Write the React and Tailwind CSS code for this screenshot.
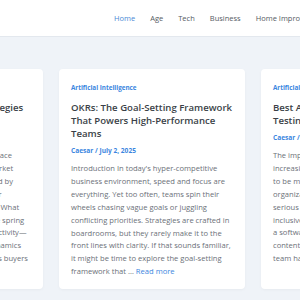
import React from 'react';

const navItems = ['Home', 'Age', 'Tech', 'Business', 'Home Improvement', 'Health'];

const posts = [
  {
    id: 1,
    category: 'Real Estate',
    title: 'Spring Markets: Selling Strategies for 2025',
    author: 'Caesar / June 28, 2025',
    lines: [
      'Introduction Spring holds a special place',
      'in the hearts of sellers across the market',
      'The warmer days are usually followed by',
      'a rush of new home listings. However',
      'competition can be tough for sellers. What',
      'strategies really work best during the spring',
      "season, when there's a big burst of activity—",
      'and how can you benefit from its dynamics',
      'to sell faster and attract more serious buyers',
    ],
    more: 'before summer arrives …',
  },
  {
    id: 2,
    category: 'Artificial Intelligence',
    title: 'OKRs: The Goal-Setting Framework That Powers High-Performance Teams',
    author: 'Caesar / July 2, 2025',
    excerpt:
      "Introduction In today's hyper-competitive business environment, speed and focus are everything. Yet too often, teams spin their wheels chasing vague goals or juggling conflicting priorities. Strategies are crafted in boardrooms, but they rarely make it to the front lines with clarity. If that sounds familiar, it might be time to explore the goal-setting framework that …",
  },
  {
    id: 3,
    category: 'Artificial Intelligence',
    title: 'Best Automated Accessibility Testing Tools for 2025',
    author: 'Caesar / June 30, 2025',
    lines: [
      'The importance of digital accessibility is',
      'increasingly clear as websites and apps need',
      'to be more usable for everyone. Many',
      'organizations are taking accessibility more',
      'serious than ever and are building more',
      'inclusive experiences. Whether you run',
      'a software company, manage a website, or build',
      'content for a wide audience, your design',
    ],
    more: 'team has to find the right tools …',
  },
];

const App = () => {
  return (
    <div className="w-[300px] h-[300px] overflow-hidden bg-[#eff3f8] font-['Open_Sans',sans-serif]">
      <header className="h-[37px] bg-white border-b border-[#e3e8ee] flex items-center pl-[114px] pt-[1px]">
        <nav className="flex gap-[15px] whitespace-nowrap text-[7.5px]">
          {navItems.map((item, i) => (
            <a key={item} className={i === 0 ? 'text-[#4a8ad6]' : 'text-[#555b63]'}>
              {item}
            </a>
          ))}
        </nav>
      </header>

      <div className="flex gap-4 pt-[32px] ml-[-143px]">
        {posts.map((post) => (
          <article
            key={post.id}
            className="w-[186px] h-[220px] shrink-0 overflow-hidden bg-white rounded-[4px] shadow-[0_1px_3px_rgba(0,0,0,0.04)] px-3 pt-[14px]"
          >
            <p className="text-[6.3px] font-bold text-[#3b86e0] leading-[10px]">{post.category}</p>
            <h2 className="mt-[8px] text-[9.6px] font-semibold text-[#3a3f47] leading-[13px]">{post.title}</h2>
            <p className="mt-[6px] text-[6.6px] font-bold text-[#3b86e0] leading-[9px]">{post.author}</p>
            {post.lines ? (
              <div className="mt-[7px] text-[7.6px] text-[#6b7078] leading-[12.9px] whitespace-nowrap">
                {post.lines.map((line) => (
                  <p key={line}>{line}</p>
                ))}
                <p>
                  {post.more} <span className="text-[#3b86e0]">Read more</span>
                </p>
              </div>
            ) : (
              <p className="mt-[7px] text-[7.6px] text-[#6b7078] leading-[12.9px]">
                {post.excerpt} <span className="text-[#3b86e0]">Read more</span>
              </p>
            )}
          </article>
        ))}
      </div>
    </div>
  );
};

export default App;
